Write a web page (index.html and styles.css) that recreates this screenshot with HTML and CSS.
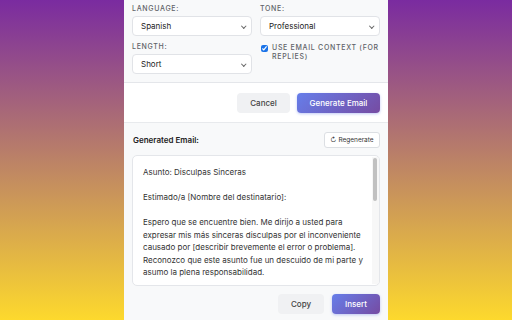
FILE: index.html
```html
<!DOCTYPE html>
<html lang="en">
<head>
    <meta charset="UTF-8">
    <meta name="viewport" content="width=device-width, initial-scale=1.0">
    <title>Email Writer</title>
    <link rel="stylesheet" href="styles.css">
</head>
<body>

    <!-- Main Panel -->
    <div class="panel">
        <!-- Settings -->
        <div class="settings">
            <div class="field">
                <label for="language">Language:</label>
                <div class="select">Spanish</div>
            </div>
            <div class="field">
                <label for="tone">Tone:</label>
                <div class="select">Professional</div>
            </div>
            <div class="field">
                <label for="length">Length:</label>
                <div class="select">Short</div>
            </div>
            <div class="field">
                <label class="check-label">
                    <input type="checkbox" checked>
                    <span>Use email context (for replies)</span>
                </label>
            </div>
        </div>

        <!-- Actions -->
        <div class="actions">
            <button class="btn btn-secondary">Cancel</button>
            <button class="btn btn-primary">Generate Email</button>
        </div>

        <!-- Result -->
        <div class="result">
            <div class="result-header">
                <h3>Generated Email:</h3>
                <button class="btn-small">&#8635; Regenerate</button>
            </div>
            <div class="result-box">
                <div class="result-text">
                    <p>Asunto: Disculpas Sinceras</p>
                    <p>Estimado/a [Nombre del destinatario]:</p>
                    <p>Espero que se encuentre bien. Me dirijo a usted para expresar mis más sinceras disculpas por el inconveniente causado por [describir brevemente el error o problema]. Reconozco que este asunto fue un descuido de mi parte y asumo la plena responsabilidad.</p>
                </div>
                <div class="scrollbar"><div class="thumb"></div></div>
            </div>
            <div class="result-actions">
                <button class="btn btn-secondary btn-copy">Copy</button>
                <button class="btn btn-primary btn-insert">Insert</button>
            </div>
        </div>
    </div>

</body>
</html>
```

FILE: styles.css
```css
/* General Styles */
body {
    font-family: 'Inter', 'Liberation Sans', sans-serif;
    margin: 0;
    padding: 0;
    height: 320px;
    overflow: hidden;
    background: linear-gradient(180deg, #7a2ba0, #fdd92d);
    color: #333;
}

.panel {
    width: 264px;
    height: 320px;
    margin: 0 auto;
    background: #f8f9fa;
    display: flex;
    flex-direction: column;
}

/* Settings */
.settings {
    display: grid;
    grid-template-columns: 1fr 1fr;
    column-gap: 8px;
    row-gap: 6px;
    padding: 4px 8px 8px;
    border-bottom: 1px solid #e4e6ea;
}

.field label {
    display: block;
    height: 10px;
    line-height: 10px;
    margin-bottom: 2px;
    font-size: 7px;
    font-weight: 500;
    letter-spacing: 0.7px;
    text-transform: uppercase;
    color: #5f6368;
}

.select {
    height: 20px;
    box-sizing: border-box;
    padding: 0 8px;
    line-height: 18px;
    border: 1px solid #e1e3e7;
    border-radius: 4px;
    background: #fff;
    font-size: 8px;
    color: #222;
    position: relative;
}

/* Chevron */
.select::after {
    content: '';
    position: absolute;
    right: 6px;
    top: 7px;
    width: 2.5px;
    height: 2.5px;
    border-right: 1px solid #666;
    border-bottom: 1px solid #666;
    transform: rotate(45deg);
}

.field .check-label {
    display: flex;
    align-items: flex-start;
    height: auto;
    line-height: 8.5px;
    margin-top: 2px;
}

.check-label input {
    width: 7px;
    height: 7px;
    margin: 1px 4px 0 1px;
    accent-color: #1a73e8;
}

/* Buttons */
.btn {
    height: 20px;
    padding: 0 12px;
    border: none;
    border-radius: 4px;
    font-family: inherit;
    font-size: 8px;
    font-weight: 500;
    cursor: pointer;
}

.btn-secondary {
    background: #f0f1f3;
    color: #444;
}

.btn-primary {
    background: linear-gradient(135deg, #667eea, #764ba2);
    color: #fff;
    box-shadow: 0 1px 3px rgba(102, 126, 234, 0.4);
}

.actions {
    display: flex;
    justify-content: flex-end;
    gap: 7px;
    padding: 10px 8px 9px;
    background: #fff;
    border-bottom: 1px solid #e8eaed;
}

.actions .btn-secondary {
    width: 53px;
}

.actions .btn-primary {
    width: 83px;
}

/* Result */
.result {
    padding: 9px 8px 0;
}

.result-header {
    display: flex;
    justify-content: space-between;
    align-items: center;
    margin-bottom: 7px;
}

.result-header h3 {
    margin: 0 0 0 1px;
    font-size: 8px;
    font-weight: 600;
    color: #222;
}

.btn-small {
    height: 16px;
    width: 56px;
    padding: 0;
    border: 1px solid #dcdfe3;
    border-radius: 3px;
    background: #fff;
    font-family: inherit;
    font-size: 6.5px;
    color: #333;
}

.result-box {
    height: 131px;
    box-sizing: border-box;
    padding: 10px 14px 0 10px;
    border: 1px solid #e4e6ea;
    border-radius: 5px;
    background: #fff;
    overflow: hidden;
    position: relative;
    font-size: 8px;
    line-height: 12.5px;
    color: #333;
}

.result-text p {
    margin: 0 0 12.5px;
}

/* Scrollbar drawn over the box */
.scrollbar {
    position: absolute;
    top: 1px;
    right: 0;
    bottom: 1px;
    width: 7px;
    background: #f7f7f7;
}

.thumb {
    width: 4px;
    height: 43px;
    margin: 1px 0 0 1px;
    border-radius: 2px;
    background: #c1c1c1;
}

.result-actions {
    display: flex;
    justify-content: flex-end;
    gap: 8px;
    margin-top: 8px;
}

.btn-copy {
    width: 46px;
}

.btn-insert {
    width: 48px;
}
```
